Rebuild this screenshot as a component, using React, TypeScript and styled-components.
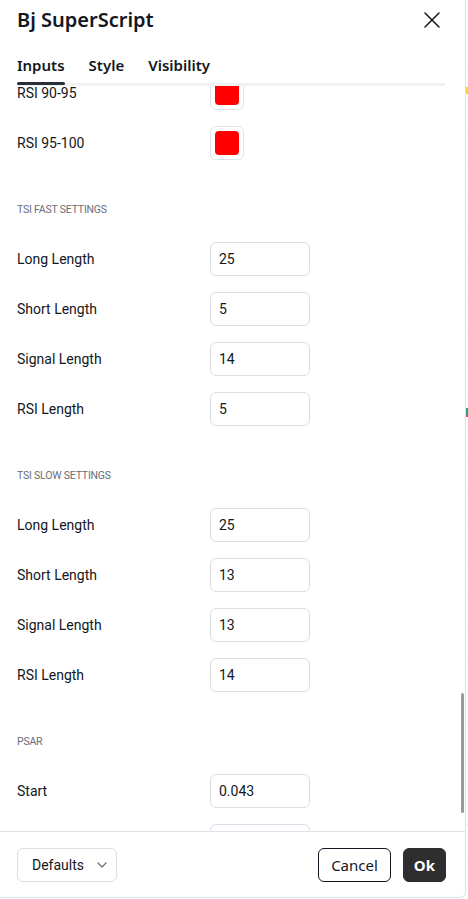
import React, { useLayoutEffect, useRef } from "react";
import styled, { createGlobalStyle } from "styled-components";

const GlobalStyle = createGlobalStyle`
  html, body {
    margin: 0;
    padding: 0;
    background: #ffffff;
  }
  body {
    font-family: "Noto Sans", "Open Sans", "Liberation Sans", sans-serif;
    color: #131722;
    -webkit-font-smoothing: antialiased;
  }
  * { box-sizing: border-box; }
`;

const fieldFont = `Roboto, "Noto Sans", "Liberation Sans", sans-serif`;

const Page = styled.div`
  display: flex;
  width: 468px;
  height: 899px;
  overflow: hidden;
`;

const Dialog = styled.div`
  position: relative;
  display: flex;
  flex-direction: column;
  width: 466px;
  height: 898px;
  background: #ffffff;
  border-right: 1px solid #e0e3eb;
  border-bottom: 1px solid #e0e3eb;
  border-bottom-right-radius: 6px;
`;

/* Sliver of the chart that stays visible beside the dialog */
const ChartStrip = styled.div`
  flex: 1;
  background:
    linear-gradient(#f2d33a, #f2d33a) 0 87px / 100% 7px no-repeat,
    linear-gradient(#2f9e8f, #2f9e8f) 0 408px / 100% 7px no-repeat,
    linear-gradient(#e04848, #e04848) 0 415px / 100% 2px no-repeat,
    repeating-linear-gradient(#ffffff 0 32px, #eef0f3 32px 33px);
`;

const Header = styled.div`
  display: flex;
  align-items: center;
  justify-content: space-between;
  height: 40px;
  padding: 0 24px 0 17px;
`;

const Title = styled.h2`
  margin: 0;
  font-size: 20px;
  font-weight: 600;
  line-height: 28px;
  color: #131722;
`;

const CloseButton = styled.button`
  display: flex;
  align-items: center;
  justify-content: center;
  width: 18px;
  height: 18px;
  padding: 0;
  border: none;
  background: none;
  color: #131722;
  cursor: pointer;
`;

const TabBar = styled.div`
  display: flex;
  gap: 24px;
  height: 46px;
  margin: 0 20px 0 17px;
  box-shadow: inset 0 -3px 0 #f0f1f3;
`;

const Tab = styled.div<{ $active?: boolean }>`
  position: relative;
  height: 43px;
  padding-top: 14px;
  font-size: 15px;
  font-weight: 600;
  line-height: 22px;
  color: #131722;

  &::after {
    content: "";
    display: ${(p) => (p.$active ? "block" : "none")};
    position: absolute;
    left: 0;
    right: 0;
    bottom: -2px;
    height: 3px;
    border-radius: 2px;
    background: #2a2e39;
  }
`;

const Body = styled.div`
  position: relative;
  flex: 1;
  min-height: 0;
`;

const Scroller = styled.div`
  position: relative;
  height: 100%;
  overflow-y: auto;
  padding: 0 20px 0 17px;
  scrollbar-width: none;
  &::-webkit-scrollbar { display: none; }
`;

const ScrollThumb = styled.div`
  position: absolute;
  right: 1px;
  top: 607px;
  width: 3px;
  height: 120px;
  border-radius: 2px;
  background: #9b9b9b;
`;

const Row = styled.div`
  display: grid;
  grid-template-columns: 193px auto;
  align-items: center;
  height: 34px;
  margin-bottom: 16px;
`;

const Label = styled.span`
  font-family: ${fieldFont};
  font-size: 14px;
  line-height: 20px;
  color: #131722;
`;

const SectionTitle = styled.div`
  padding: 27px 0 25px;
  font-family: ${fieldFont};
  font-size: 10.5px;
  letter-spacing: -0.2px;
  line-height: 14px;
  text-transform: uppercase;
  color: #6a6d78;
`;

const Swatch = styled.button`
  display: flex;
  align-items: center;
  justify-content: center;
  width: 34px;
  height: 34px;
  padding: 0;
  border: 1px solid #e0e3eb;
  border-radius: 6px;
  background: #ffffff;
`;

const SwatchFill = styled.span<{ $color: string }>`
  width: 24px;
  height: 24px;
  border-radius: 4px;
  background: ${(p) => p.$color};
`;

const NumberField = styled.input`
  width: 100px;
  height: 34px;
  padding: 0 8px;
  border: 1px solid #dcdee3;
  border-radius: 6px;
  font-family: ${fieldFont};
  font-size: 14px;
  color: #131722;
  outline: none;
`;

const Footer = styled.div`
  display: flex;
  align-items: center;
  gap: 12px;
  padding: 16px 19px 15px 17px;
  border-top: 1px solid #e0e3eb;
`;

const DefaultsButton = styled.button`
  display: flex;
  align-items: center;
  justify-content: space-between;
  width: 100px;
  height: 34px;
  padding: 0 9px 0 14px;
  margin-right: auto;
  border: 1px solid #dcdee3;
  border-radius: 6px;
  background: #ffffff;
  font-family: ${fieldFont};
  font-size: 14px;
  color: #131722;
`;

const ActionButton = styled.button<{ $primary?: boolean }>`
  height: 34px;
  padding: 0 ${(p) => (p.$primary ? "10px" : "12px")};
  border: 1px solid ${(p) => (p.$primary ? "#2e2e2e" : "#131722")};
  border-radius: 6px;
  background: ${(p) => (p.$primary ? "#2e2e2e" : "#ffffff")};
  color: ${(p) => (p.$primary ? "#ffffff" : "#131722")};
  font-family: inherit;
  font-size: 15px;
  font-weight: ${(p) => (p.$primary ? 700 : 400)};
`;

type Field =
  | { kind: "section"; title: string }
  | { kind: "color"; label: string; color: string }
  | { kind: "number"; label: string; value: string };

const fields: Field[] = [
  { kind: "color", label: "RSI 80-85", color: "#ff9800" },
  { kind: "color", label: "RSI 85-90", color: "#ff5252" },
  { kind: "color", label: "RSI 90-95", color: "#ff0000" },
  { kind: "color", label: "RSI 95-100", color: "#ff0000" },
  { kind: "section", title: "TSI Fast Settings" },
  { kind: "number", label: "Long Length", value: "25" },
  { kind: "number", label: "Short Length", value: "5" },
  { kind: "number", label: "Signal Length", value: "14" },
  { kind: "number", label: "RSI Length", value: "5" },
  { kind: "section", title: "TSI Slow Settings" },
  { kind: "number", label: "Long Length", value: "25" },
  { kind: "number", label: "Short Length", value: "13" },
  { kind: "number", label: "Signal Length", value: "13" },
  { kind: "number", label: "RSI Length", value: "14" },
  { kind: "section", title: "PSAR" },
  { kind: "number", label: "Start", value: "0.043" },
  { kind: "number", label: "Increment", value: "0.02" },
  { kind: "number", label: "Maximum", value: "0.2" },
];

const FIRST_VISIBLE = "RSI 90-95";

function CloseIcon() {
  return (
    <svg width="16" height="16" viewBox="0 0 16 16" fill="none">
      <path d="M1 1 L15 15 M15 1 L1 15" stroke="currentColor" strokeWidth="1.5" strokeLinecap="round" />
    </svg>
  );
}

function Chevron() {
  return (
    <svg width="10" height="6" viewBox="0 0 10 6" fill="none">
      <path d="M1 1 L5 5 L9 1" stroke="#6a6d78" strokeWidth="1.2" strokeLinecap="round" strokeLinejoin="round" />
    </svg>
  );
}

export default function App() {
  const scrollerRef = useRef<HTMLDivElement>(null);
  const anchorRef = useRef<HTMLDivElement>(null);

  useLayoutEffect(() => {
    const scroller = scrollerRef.current;
    const anchor = anchorRef.current;
    if (scroller && anchor) {
      scroller.scrollTop = anchor.offsetTop + 10;
    }
  }, []);

  return (
    <>
      <GlobalStyle />
      <Page>
        <Dialog>
          <Header>
            <Title>Bj SuperScript</Title>
            <CloseButton aria-label="Close">
              <CloseIcon />
            </CloseButton>
          </Header>
          <TabBar>
            <Tab $active>Inputs</Tab>
            <Tab>Style</Tab>
            <Tab>Visibility</Tab>
          </TabBar>
          <Body>
            <Scroller ref={scrollerRef}>
              {fields.map((f, i) => {
                if (f.kind === "section") {
                  return <SectionTitle key={i}>{f.title}</SectionTitle>;
                }
                const anchor = f.kind === "color" && f.label === FIRST_VISIBLE ? anchorRef : undefined;
                return (
                  <Row key={i} ref={anchor}>
                    <Label>{f.label}</Label>
                    {f.kind === "color" ? (
                      <Swatch>
                        <SwatchFill $color={f.color} />
                      </Swatch>
                    ) : (
                      <NumberField defaultValue={f.value} />
                    )}
                  </Row>
                );
              })}
            </Scroller>
            <ScrollThumb />
          </Body>
          <Footer>
            <DefaultsButton>
              Defaults
              <Chevron />
            </DefaultsButton>
            <ActionButton>Cancel</ActionButton>
            <ActionButton $primary>Ok</ActionButton>
          </Footer>
        </Dialog>
        <ChartStrip />
      </Page>
    </>
  );
}
